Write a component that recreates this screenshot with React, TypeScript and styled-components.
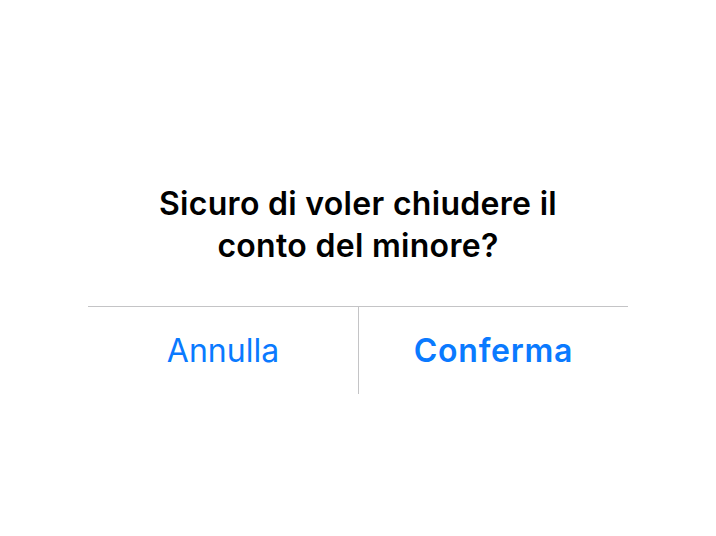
import React from 'react'
import styled, { createGlobalStyle } from 'styled-components'

const GlobalStyle = createGlobalStyle`
  html, body {
    margin: 0;
    padding: 0;
    background: #ffffff;
  }
  body {
    font-family: Inter, "Noto Sans", "Liberation Sans", sans-serif;
    -webkit-font-smoothing: antialiased;
  }
`

const Page = styled.div`
  width: 716px;
  height: 536px;
  display: flex;
  align-items: center;
  justify-content: center;
`

const Alert = styled.div`
  width: 540px;
  display: flex;
  flex-direction: column;
  background: #ffffff;
`

const Title = styled.h2`
  margin: 0;
  padding: 40px 20px 39px;
  font-size: 32px;
  line-height: 42px;
  font-weight: 600;
  color: #000000;
  text-align: center;
  letter-spacing: 0.3px;
`

const Actions = styled.div`
  display: grid;
  grid-template-columns: 1fr 1fr;
  border-top: 1px solid #c4c4c6;
  height: 87px;
`

const ActionButton = styled.button<{ $primary?: boolean }>`
  border: none;
  background: transparent;
  padding: 0;
  font-family: inherit;
  font-size: 32px;
  font-weight: ${(p) => (p.$primary ? 600 : 400)};
  letter-spacing: ${(p) => (p.$primary ? '0.75px' : '0')};
  color: #0a7aff;
  cursor: pointer;
  & + & {
    border-left: 1px solid #c4c4c6;
  }
`

const App: React.FC = () => {
  return (
    <>
      <GlobalStyle />
      <Page>
        <Alert>
          <Title>
            Sicuro di voler chiudere il
            <br />
            conto del minore?
          </Title>
          <Actions>
            <ActionButton>Annulla</ActionButton>
            <ActionButton $primary>Conferma</ActionButton>
          </Actions>
        </Alert>
      </Page>
    </>
  )
}

export default App
